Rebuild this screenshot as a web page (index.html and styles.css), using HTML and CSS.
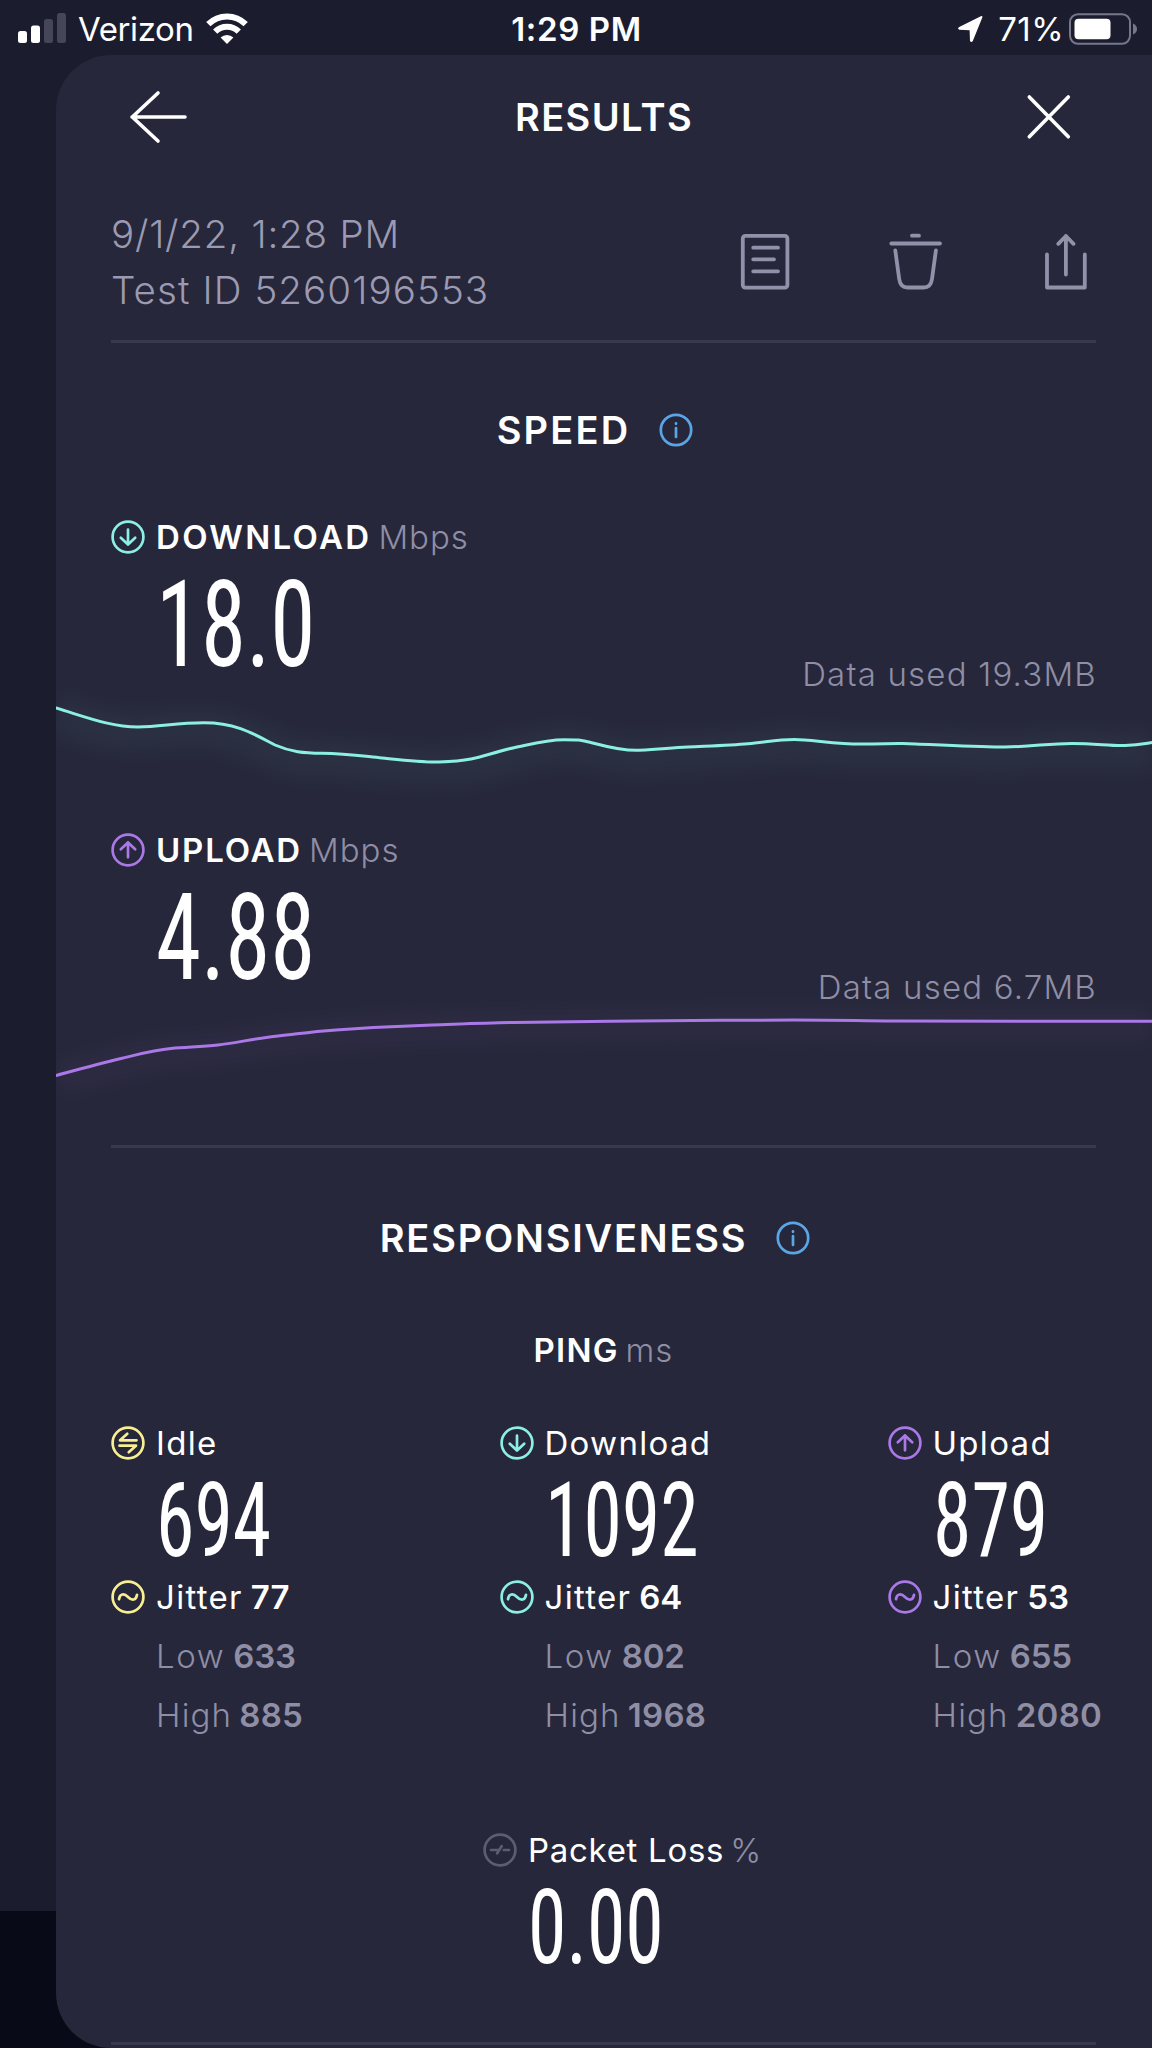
FILE: index.html
```
<!DOCTYPE html>
<html lang="en">
<head>
    <meta charset="UTF-8">
    <meta name="viewport" content="width=device-width, initial-scale=1.0">
    <title>Results</title>
    <link rel="stylesheet" href="styles.css">
</head>
<body>
    <!-- shared icons -->
    <svg class="sprite" width="0" height="0">
        <symbol id="i-down" viewBox="0 0 34 34">
            <circle cx="17" cy="17" r="15.4"/>
            <path d="M17 9.7V24.6M9.8 17.8L17 24.6L24.2 17.8"/>
        </symbol>
        <symbol id="i-up" viewBox="0 0 34 34">
            <circle cx="17" cy="17" r="15.4"/>
            <path d="M17 24.3V9.4M9.8 16.2L17 9.4L24.2 16.2"/>
        </symbol>
        <symbol id="i-idle" viewBox="0 0 34 34">
            <circle cx="17" cy="17" r="15.4"/>
            <path d="M25.5 14.3H9L16.3 7.8M8.5 19.7H25L17.7 26.2"/>
        </symbol>
        <symbol id="i-jitter" viewBox="0 0 34 34">
            <circle cx="17" cy="17" r="15.4"/>
            <path d="M8 19.2C8.8 13.6 13 12.9 17 17S25.2 20.4 26 14.8"/>
        </symbol>
        <symbol id="i-loss" viewBox="0 0 34 34">
            <circle cx="17" cy="17" r="15.4"/>
            <path d="M8 17H15M14.2 20.3L18.6 13.2M20.8 17H26"/>
        </symbol>
        <symbol id="i-info" viewBox="0 0 34 34">
            <circle cx="17" cy="17" r="15.2"/>
            <path d="M17 15V24M17 10.3V10.8"/>
        </symbol>
    </svg>

    <div class="statusbar">
        <div class="carrier">
            <svg class="signal" width="48" height="30" viewBox="0 0 48 30">
                <rect x="0" y="18" width="9" height="12" rx="2.5"/>
                <rect x="13" y="12.5" width="9" height="17.5" rx="2.5"/>
                <rect class="off" x="26" y="6" width="9" height="24" rx="2.5"/>
                <rect class="off" x="39" y="0" width="9" height="30" rx="2.5"/>
            </svg>
            <span class="carrier-name">Verizon</span>
            <svg class="wifi" width="42" height="31" viewBox="0 0 42 31">
                <path class="arc" d="M2.3 11.2A26.4 26.4 0 0 1 39.7 11.2"/>
                <path class="arc" d="M9.2 18.7A16.8 16.8 0 0 1 32.8 18.7"/>
                <path d="M21 31L14.6 24.4A9.4 9.4 0 0 1 27.4 24.4Z"/>
            </svg>
        </div>
        <div class="time">1:29 PM</div>
        <div class="power">
            <svg class="location" width="25" height="26" viewBox="0 0 25 26">
                <path d="M24.3 1.6L14.8 25Q13.4 27.2 12 25L11.6 14.2L1.2 13.8Q-1 12.4 1.2 11L22.8.2Q25-.6 24.3 1.6Z"/>
            </svg>
            <span class="percent">71%</span>
            <svg width="68" height="32" viewBox="0 0 68 32">
                <rect class="shell" x="1" y="1.2" width="60" height="29.6" rx="8"/>
                <rect x="5.5" y="5.8" width="36" height="20.4" rx="4"/>
                <path class="nub" d="M64 10.5Q68 12.5 68 16T64 21.5Z"/>
            </svg>
        </div>
    </div>

    <main class="panel">
        <header class="header">
            <svg width="64" height="64" viewBox="0 0 64 64">
                <path d="M58 32H5M31 8L5.3 32L31 56"/>
            </svg>
            <h1>RESULTS</h1>
            <svg width="64" height="64" viewBox="0 0 64 64">
                <path d="M12.3 12L51.3 51.8M51.3 12L12.3 51.8"/>
            </svg>
        </header>

        <div class="content">
            <div class="meta">
                <div class="meta-text">
                    <div class="date">9/1/22, 1:28 PM</div>
                    <div>Test ID 5260196553</div>
                </div>
                <div class="actions">
                    <svg width="60" height="60" viewBox="0 0 60 60">
                        <rect x="6.8" y="3.9" width="44.6" height="51.7" rx="2.5"/>
                        <path d="M17.2 15.7H42M17.2 27.3H38M17.2 39.3H42"/>
                    </svg>
                    <svg width="60" height="60" viewBox="0 0 60 60">
                        <path d="M26 3.7H33M5.3 11.5H54M9.3 18.5L13.2 47Q14.4 55.5 21.5 55.5H37.7Q44.8 55.5 46 47L49.9 18.5"/>
                    </svg>
                    <svg width="60" height="60" viewBox="0 0 60 60">
                        <path d="M11 22.5V55.5H48.8V22.5M29.9 42.5V4M22.3 11.8L29.9 4L37.5 11.8"/>
                    </svg>
                </div>
            </div>
            <div class="divider"></div>
            <h2 class="speed-title">SPEED <svg class="icon info"><use href="#i-info"/></svg></h2>
        </div>

        <section class="speed">
            <div class="label"><svg class="icon teal"><use href="#i-down"/></svg><b>DOWNLOAD</b><span class="unit">Mbps</span></div>
            <div class="reading">
                <div class="number big">18.0</div>
                <div class="used">Data used 19.3MB</div>
            </div>
            <svg class="chart teal" width="1096" height="120" viewBox="0 0 1096 120">
                <path class="glow" d="M0 22C18 27 28 33 44 36S68 41 82 41S104 38 115 38S136 35.5 148 36.7S164 38 172 41S190 45 198 49S211 56 219 59S235 65.5 251 66.7S278 67 290 68S314 71.3 326 72S368 76.5 383 76S403 75.3 415 73S442 65 458 61.7S490 53.7 508 53.7S524 54 533 56S562 65 583 64.3S612 62 632 61S674 59.3 692 57.7S722 53.5 738 53.5S780 58 804 58S833 57.3 847 57.5S920 61.5 949 61S992 57.5 1016 57.5S1054 60 1069 59.5S1086 58 1096 56.5"/>
                <path d="M0 16C30 25 55 35 82 35C104 35 120 30.7 148 30.7C180 30.7 198 42 219 53C235 60 248 61 266 61.3C290 61.5 306 64 326 66S368 70.5 383 70S403 69.3 415 67S442 59 458 55.7S490 47.7 508 47.7S524 48 533 50S562 59 583 58.3S612 56 632 55S674 53.3 692 51.7S722 47.5 738 47.5S780 52 804 52S833 51.3 847 51.5S920 55.5 949 55S992 51.5 1016 51.5S1054 54 1069 53.5S1086 52 1096 50.5"/>
            </svg>
        </section>

        <section class="speed">
            <div class="label"><svg class="icon purple"><use href="#i-up"/></svg><b>UPLOAD</b><span class="unit">Mbps</span></div>
            <div class="reading">
                <div class="number big">4.88</div>
                <div class="used">Data used 6.7MB</div>
            </div>
            <svg class="chart purple" width="1096" height="120" viewBox="0 0 1096 120">
                <path class="glow" d="M0 74.5C24 68 42 63 65 57.5S98 49 115 47.5S146 45.8 162 44S202 37 222 35S252 31 280 29S346 25 376 24S430 22 458 21.5S520 20.5 554 20.3S680 19 738 19S800 20 840 20S1040 20.3 1096 20.3"/>
                <path d="M0 70.5C24 64 42 59 65 53.5S98 45 115 43.5S146 41.8 162 40S202 33 222 31S252 27 280 25S346 21 376 20S430 18 458 17.5S520 16.5 554 16.3S680 15 738 15S800 16 840 16S1040 16.3 1096 16.3"/>
            </svg>
        </section>

        <section class="content">
            <div class="divider"></div>
            <h2 class="resp-title">RESPONSIVENESS <svg class="icon info"><use href="#i-info"/></svg></h2>
            <div class="label ping"><b>PING</b><span class="unit">ms</span></div>

            <div class="columns">
                <div class="column">
                    <div class="label"><svg class="icon yellow"><use href="#i-idle"/></svg>Idle</div>
                    <div class="number">694</div>
                    <div class="label"><svg class="icon yellow"><use href="#i-jitter"/></svg>Jitter<strong>77</strong></div>
                    <div class="label low">Low<strong>633</strong></div>
                    <div class="label high">High<strong>885</strong></div>
                </div>
                <div class="column">
                    <div class="label"><svg class="icon teal"><use href="#i-down"/></svg>Download</div>
                    <div class="number">1092</div>
                    <div class="label"><svg class="icon teal"><use href="#i-jitter"/></svg>Jitter<strong>64</strong></div>
                    <div class="label low">Low<strong>802</strong></div>
                    <div class="label high">High<strong>1968</strong></div>
                </div>
                <div class="column">
                    <div class="label"><svg class="icon purple"><use href="#i-up"/></svg>Upload</div>
                    <div class="number">879</div>
                    <div class="label"><svg class="icon purple"><use href="#i-jitter"/></svg>Jitter<strong>53</strong></div>
                    <div class="label low">Low<strong>655</strong></div>
                    <div class="label high">High<strong>2080</strong></div>
                </div>
            </div>

            <div class="packet">
                <div class="label"><svg class="icon gray"><use href="#i-loss"/></svg>Packet Loss<span class="unit">%</span></div>
                <div class="number">0.00</div>
            </div>
            <div class="divider"></div>
        </section>
    </main>
</body>
</html>
```
FILE: styles.css
```
:root {
    --bg: #1b1c2d;
    --bg-bottom: #080a17;
    --panel: #26273a;
    --line: #38394d;
    --muted: #8f8ea5;
    --teal: #8cefe4;
    --purple: #ab78e8;
    --yellow: #f8ef92;
    --blue: #5aa5e6;
}

* {
    box-sizing: border-box;
}

body {
    margin: 0;
    height: 2048px;
    overflow: hidden;
    background: linear-gradient(var(--bg) 1911px, var(--bg-bottom) 1911px);
    color: #fff;
    font-family: Inter, "Liberation Sans", sans-serif;
    font-size: 33px;
}

svg {
    display: block;
    flex: none;
    overflow: visible;
    fill: none;
    stroke-linecap: round;
    stroke-linejoin: round;
}

.sprite {
    position: absolute;
}

/* Status bar */
.statusbar {
    display: grid;
    grid-template-columns: 1fr auto 1fr;
    align-items: center;
    height: 55px;
    padding: 3px 15px 0 18px;
    line-height: 52px;
}

.statusbar svg {
    fill: #fff;
}

.carrier,
.power {
    display: flex;
    align-items: center;
}

.signal {
    margin: -2px 12px 0 0;
}

.signal .off {
    fill: #46465a;
}

.carrier-name {
    letter-spacing: -0.4px;
}

.wifi {
    margin: -2px 0 0 12px;
}

.statusbar .arc {
    fill: none;
    stroke: #fff;
    stroke-width: 6px;
    stroke-linecap: butt;
}

.time {
    margin-right: 2px;
    font-weight: 600;
    letter-spacing: 0.6px;
}

.power {
    justify-content: flex-end;
}

.percent {
    margin: 0 5px 0 15px;
    letter-spacing: 0.4px;
}

.shell {
    fill: none;
    stroke: #77778a;
    stroke-width: 2px;
}

.statusbar .nub {
    fill: #77778a;
}

/* Results panel */
.panel {
    height: 1993px;
    margin-left: 56px;
    background: var(--panel);
    border-radius: 55px 0 0 55px;
}

.header {
    display: flex;
    align-items: center;
    justify-content: space-between;
    height: 124px;
    padding: 0 71px;
}

.header svg {
    stroke: #fff;
    stroke-width: 3.6px;
}

h1,
h2 {
    margin: 0;
    font-size: 38px;
    font-weight: 580;
    line-height: 40px;
    letter-spacing: 1.8px;
}

h1 {
    letter-spacing: 1.4px;
}

h2 {
    display: flex;
    align-items: center;
    justify-content: center;
    gap: 29px;
    padding-right: 17px;
}

.content {
    padding: 0 56px 0 55px;
}

.meta {
    display: flex;
    align-items: center;
    justify-content: space-between;
    padding: 27px 0 22px;
    color: #9c9ab2;
    font-size: 38.5px;
    font-weight: 350;
    line-height: 56px;
    letter-spacing: 1.1px;
}

.date {
    letter-spacing: 0.8px;
}

.actions {
    display: flex;
    gap: 90px;
}

.actions svg {
    stroke: #9391a9;
    stroke-width: 3.8px;
}

.divider {
    height: 3px;
    background: var(--line);
}

.speed-title {
    margin-top: 67px;
    letter-spacing: 2.2px;
}

/* Labels and icons */
.icon {
    width: 34px;
    height: 34px;
    stroke-width: 2.7px;
}

.label .icon {
    margin-right: 11px;
}

.teal { stroke: var(--teal); }
.purple { stroke: var(--purple); }
.yellow { stroke: var(--yellow); }
.gray { stroke: #5d5d72; }
.info { stroke: var(--blue); }

.label {
    display: flex;
    align-items: center;
    height: 34px;
    line-height: 34px;
    font-weight: 370;
    letter-spacing: 1.3px;
    white-space: nowrap;
}

.label b {
    font-weight: 600;
    letter-spacing: 2.3px;
}

.speed + .speed b {
    letter-spacing: 1.8px;
}

.label strong {
    margin-left: 8px;
    font-weight: 630;
    letter-spacing: 0;
}

.unit {
    margin-left: 7px;
    color: var(--muted);
    font-weight: 340;
    letter-spacing: 1px;
}

.number {
    height: 80px;
    margin: 20px 0 20px 45px;
    font-family: Roboto, "Open Sans", sans-serif;
    font-size: 103px;
    font-stretch: 75%;
    font-weight: 375;
    line-height: 82px;
    transform: scaleX(0.755);
    transform-origin: left;
}

/* Speed */
.speed .label {
    margin: 70px 0 0 55px;
}

.speed + .speed .label {
    margin-top: 21px;
}

.reading {
    display: flex;
    align-items: flex-end;
    justify-content: space-between;
    height: 117px;
    margin-top: 21px;
    padding: 0 55px 0 100px;
}

.number.big {
    height: 117px;
    margin: 0;
    font-size: 121px;
    line-height: 101px;
}

.used {
    color: var(--muted);
    font-weight: 340;
    line-height: 36px;
    letter-spacing: 1.2px;
}

.chart {
    stroke-width: 3px;
    clip-path: inset(-40px 0);
}

.chart .glow {
    stroke-width: 40px;
    stroke-linecap: butt;
    opacity: 0.04;
    filter: blur(9px);
}

.speed + .content {
    margin-top: 20px;
}

/* Responsiveness */
.resp-title {
    margin-top: 70px;
}

.ping {
    justify-content: center;
    margin: 75px 0 59px;
}

.ping b {
    letter-spacing: 1.2px;
}

.columns {
    display: grid;
    grid-template-columns: 388.5px 388px 1fr;
}

.column {
    min-width: 0;
}

.low,
.high {
    margin: 25px 0 0 45px;
    color: var(--muted);
    font-weight: 340;
    letter-spacing: 1.6px;
}

.low strong {
    letter-spacing: -0.2px;
}

.high {
    margin-top: 25px;
    letter-spacing: 1.2px;
}

.high strong {
    margin-left: 7px;
    letter-spacing: 0.3px;
}

.packet {
    margin: 101px 0 75px 372px;
}

.packet .label {
    letter-spacing: 0.7px;
}

.packet .unit {
    margin-left: 6px;
}
```
